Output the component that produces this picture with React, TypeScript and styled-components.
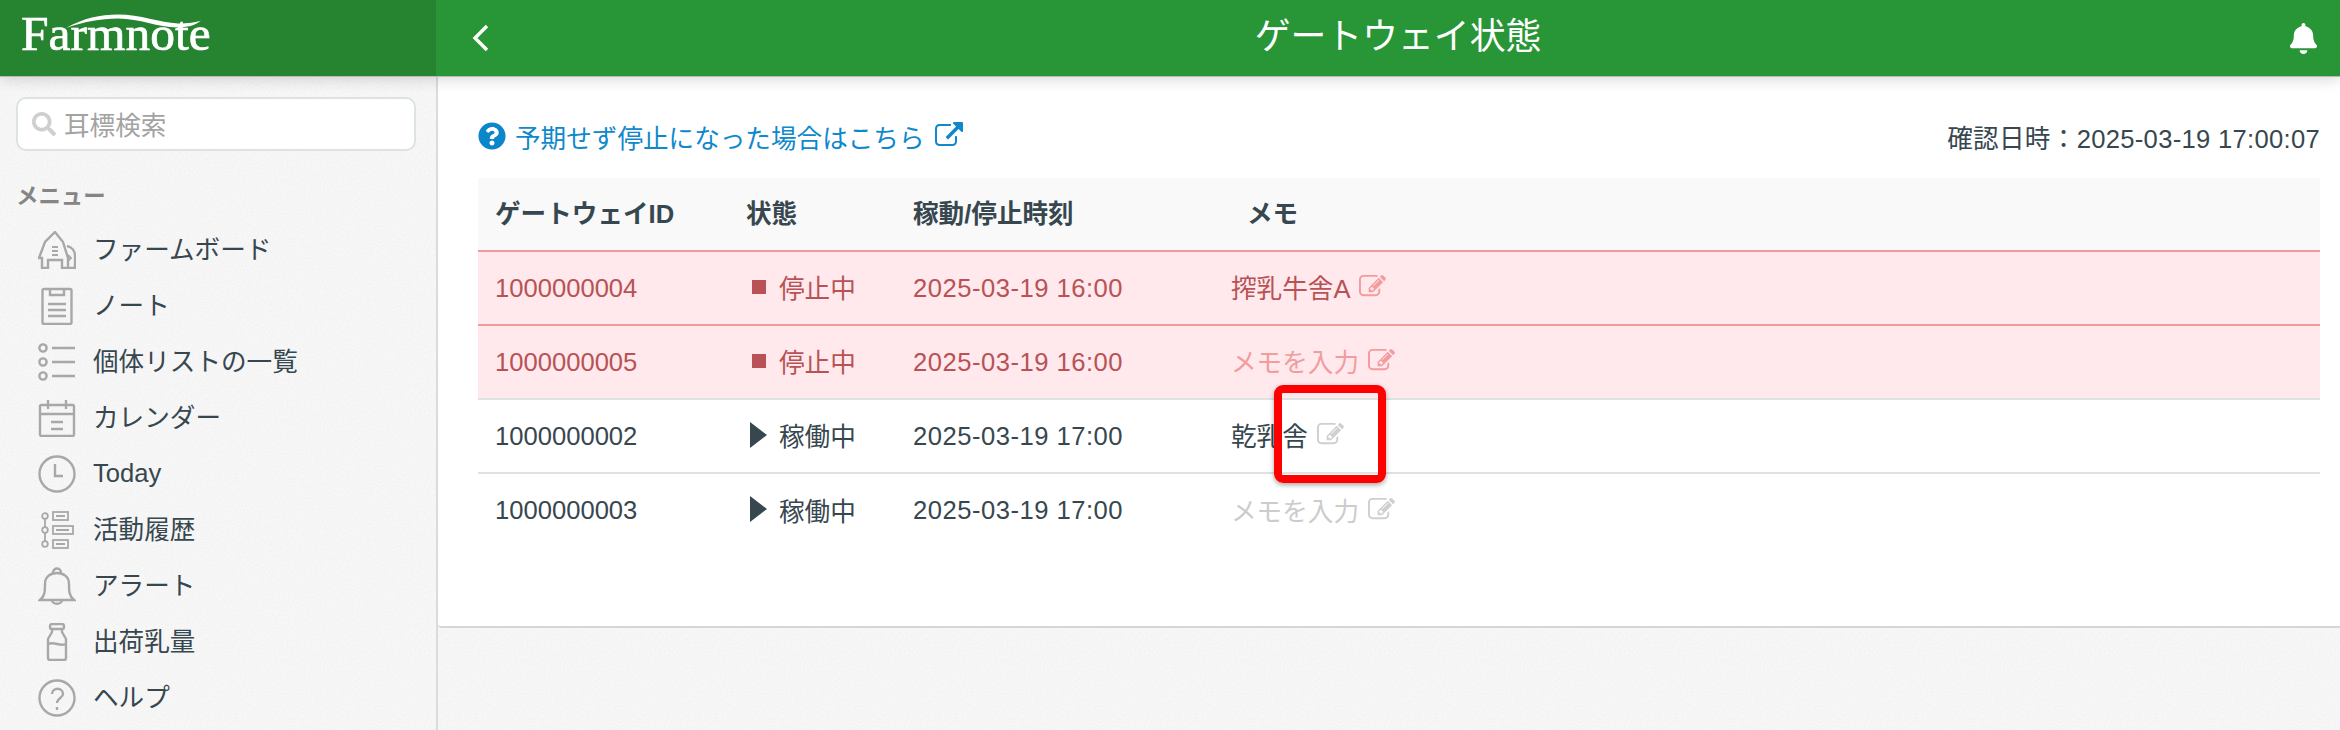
import React from 'react';
import styled, {createGlobalStyle} from 'styled-components';
import {FaBell, FaQuestionCircle, FaSearch} from 'react-icons/fa';

const NOISE =
  "data:image/svg+xml,%3Csvg xmlns='http://www.w3.org/2000/svg' width='240' height='240'%3E%3Cfilter id='n'%3E%3CfeTurbulence type='fractalNoise' baseFrequency='0.55' numOctaves='2' stitchTiles='stitch'/%3E%3CfeColorMatrix values='0 0 0 0 0.5 0 0 0 0 0.5 0 0 0 0 0.5 0.22 0 0 0 -0.09'/%3E%3C/filter%3E%3Crect width='240' height='240' filter='url(%23n)'/%3E%3C/svg%3E";

const GlobalStyle = createGlobalStyle`
  html, body {
    margin: 0;
    padding: 0;
    height: 730px;
    overflow: hidden;
    background: #f7f7f7;
    font-family: "Liberation Sans", "Noto Sans CJK JP", sans-serif;
    color: #37474f;
  }
`;

const Page = styled.div`
  position: relative;
  width: 2340px;
  height: 730px;
  display: flex;
  flex-direction: column;
  overflow: hidden;
  background-image: url("${NOISE}");
`;

const TopBar = styled.header`
  height: 76px;
  flex: none;
  display: flex;
  background: #289536;
  color: #fff;
  position: relative;
  z-index: 2;
  box-shadow: 0 1px 0 #b9b9b9, 0 3px 14px rgba(0, 0, 0, 0.16);
`;

const LogoArea = styled.div`
  width: 436px;
  flex: none;
  background: #26832f;
  position: relative;
`;

const LogoText = styled.span`
  position: absolute;
  left: 21px;
  top: 6px;
  font-family: "Liberation Serif", serif;
  font-size: 49.5px;
  line-height: 56px;
  color: #fff;
  -webkit-text-stroke: 0.7px #fff;
`;

const LogoSwoosh = styled.svg`
  position: absolute;
  left: 60px;
  top: 12px;
`;

const TitleArea = styled.div`
  flex: 1;
  display: flex;
  align-items: center;
  padding: 0 21px 0 35px;
`;

const BackIcon = styled.svg`
  flex: none;
`;

const Title = styled.h1`
  flex: 1;
  margin: 0;
  padding: 0 0 3px 17px;
  text-align: center;
  font-size: 35.84px;
  font-weight: 400;
  line-height: 44px;
`;

const BellIcon = styled(FaBell)`
  flex: none;
  font-size: 31px;
`;

const Body = styled.div`
  flex: 1;
  display: flex;
  min-height: 0;
`;

const Sidebar = styled.aside`
  width: 400px;
  flex: none;
  padding: 21px 20px 0 16px;
  border-right: 2px solid #d8dcde;
`;

const SearchBox = styled.div`
  height: 54px;
  box-sizing: border-box;
  display: flex;
  align-items: center;
  gap: 8px;
  padding-left: 14px;
  background: #fff;
  border: 2px solid #dde2e5;
  border-radius: 10px;
`;

const SearchIcon = styled(FaSearch)`
  font-size: 24px;
  color: #cfcfcf;
`;

const SearchPlaceholder = styled.span`
  padding-bottom: 2px;
  font-size: 25.6px;
  color: #a3a3a3;
`;

const MenuLabel = styled.div`
  margin: 32px 0 0;
  font-size: 22.4px;
  line-height: 28px;
  font-weight: 700;
  color: #858585;
`;

const MenuList = styled.ul`
  list-style: none;
  margin: 8px 0 0;
  padding: 0;
`;

const MenuItem = styled.li`
  height: 56px;
  display: flex;
  align-items: center;
  padding-left: 22px;
  font-size: 25.6px;
  color: #37474f;
`;

const MenuIconSlot = styled.span`
  width: 55px;
  flex: none;
  display: flex;
  margin-top: 5px;
`;

const MenuText = styled.span<{$latin?: boolean}>`
  padding-top: ${(p) => (p.$latin ? 5 : 0)}px;
`;

const MenuSvg = styled.svg`
  fill: none;
  stroke: #a8a8a8;
  stroke-width: 2.4;
`;

const Main = styled.main`
  flex: 1;
  min-width: 0;
`;

const Card = styled.section`
  height: 552px;
  box-sizing: border-box;
  padding: 38px 20px 0 40px;
  background: #fff;
  border-bottom: 2px solid #d6d6d6;
  border-radius: 4px 0 0 4px;
`;

const InfoRow = styled.div`
  height: 64px;
  display: flex;
  align-items: flex-start;
  justify-content: space-between;
`;

const HelpLink = styled.a`
  display: flex;
  align-items: center;
  height: 44px;
  color: #0f88cc;
  font-size: 25.6px;
`;

const HelpIcon = styled(FaQuestionCircle)`
  font-size: 28px;
  margin-right: 9px;
  color: #0a86ca;
`;

const ExternalIcon = styled.svg`
  margin-left: 10px;
  fill: #0f88cc;
`;

const CheckedAt = styled.span`
  padding-top: 3px;
  line-height: 44px;
  font-size: 25.6px;
  letter-spacing: 0.3px;
  color: #37474f;
`;

const Table = styled.table`
  width: 100%;
  border-collapse: collapse;
  table-layout: fixed;
  font-size: 25.6px;
`;

const HeadRow = styled.tr`
  height: 73px;
  background: #f9f9f9;
`;

const Th = styled.th<{$w: number; $pad: number}>`
  width: ${(p) => p.$w}px;
  padding: 0 0 5px ${(p) => p.$pad}px;
  text-align: left;
  font-weight: 700;
  box-sizing: border-box;
`;

const Row = styled.tr<{$stopped?: boolean}>`
  height: 74px;
  background: ${(p) => (p.$stopped ? '#ffe9ec' : '#fff')};
  color: ${(p) => (p.$stopped ? '#b85256' : '#37474f')};
  border-top: 2px solid ${(p) => (p.$stopped ? '#f09a9c' : '#dde2e5')};
`;

const Td = styled.td<{$pad: number; $spaced?: boolean}>`
  padding: 0 0 0 ${(p) => p.$pad}px;
  white-space: nowrap;
  letter-spacing: ${(p) => (p.$spaced ? '0.5px' : 'normal')};
`;

const Status = styled.span`
  display: flex;
  align-items: center;
  gap: 12px;
  margin-top: -3px;
`;

const StopMark = styled.i`
  width: 14px;
  height: 14px;
  margin: 0 1px 0 2px;
  background: currentColor;
`;

const PlayMark = styled.i`
  width: 0;
  height: 0;
  border-style: solid;
  border-width: 13px 0 13px 17px;
  border-color: transparent transparent transparent currentColor;
`;

const Memo = styled.span`
  display: flex;
  align-items: center;
  gap: 9px;
  margin-top: -3px;
`;

const MemoPlaceholder = styled.span<{$stopped?: boolean}>`
  color: ${(p) => (p.$stopped ? '#f29c9e' : '#cccccc')};
`;

const EditIcon = styled.svg<{$stopped?: boolean}>`
  fill: ${(p) => (p.$stopped ? '#f29c9e' : '#cfcfcf')};
`;

const Highlight = styled.div`
  position: absolute;
  left: 1274px;
  top: 385px;
  width: 112px;
  height: 98px;
  box-sizing: border-box;
  border: 8px solid #ff0000;
  border-radius: 9px;
  box-shadow: 0 2px 5px rgba(0, 0, 0, 0.35);
  z-index: 3;
`;

const EDIT_PATH =
  'M888 1184l116-116-152-152-116 116v56h96v96h56zm440-720q-16-16-33 1l-350 350q-17 17-1 33t33-1l350-350q17-17 1-33zm80 594v190q0 119-84.5 203.5t-203.5 84.5h-832q-119 0-203.5-84.5t-84.5-203.5v-832q0-119 84.5-203.5t203.5-84.5h832q63 0 117 25 15 7 18 23 3 17-9 29l-49 49q-14 14-32 8-23-6-45-6h-832q-66 0-113 47t-47 113v832q0 66 47 113t113 47h832q66 0 113-47t47-113v-126q0-13 9-22l64-64q15-15 35-7t20 29zm-96-738l288 288-672 672h-288v-288zm444 132l-92 92-288-288 92-92q28-28 68-28t68 28l152 152q28 28 28 68t-28 68z';

const EXTERNAL_PATH =
  'M1408 928v320q0 119-84.5 203.5t-203.5 84.5h-832q-119 0-203.5-84.5t-84.5-203.5v-832q0-119 84.5-203.5t203.5-84.5h704q14 0 23 9t9 23v64q0 14-9 23t-23 9h-704q-66 0-113 47t-47 113v832q0 66 47 113t113 47h832q66 0 113-47t47-113v-320q0-14 9-23t23-9h64q14 0 23 9t9 23zm384-864v512q0 26-19 45t-45 19-45-19l-176-176-652 652q-10 10-23 10t-23-10l-114-114q-10-10-10-23t10-23l652-652-176-176q-19-19-19-45t19-45 45-19h512q26 0 45 19t19 45z';

const icons: Record<string, React.ReactNode> = {
  board: (
    <>
      <path d="M4 37V27H1l6-16L17 1l8 10 5 16v10h-6v-8H10v8z" />
      <path d="M29 15c5 1 8 5 8 10v12h-7" />
      <path d="M14 16h6M14 20h6M14 24h6M30 24l3 3-3 3" strokeWidth="1.8" />
    </>
  ),
  note: (
    <>
      <rect x="4.5" y="2" width="29" height="35" rx="1.5" />
      <path d="M12 2v6h14V2M10 17h18M10 23h18M10 29h18" />
    </>
  ),
  list: (
    <>
      <circle cx="5" cy="5" r="3.6" />
      <circle cx="5" cy="19" r="3.6" />
      <circle cx="5" cy="33" r="3.6" />
      <path d="M14 5h23M14 19h23M14 33h23" />
    </>
  ),
  calendar: (
    <>
      <rect x="2" y="6" width="34" height="31" rx="1.5" />
      <path d="M2 15h34M10 1v9M28 1v9M13 23h12M13 30h12" />
    </>
  ),
  clock: (
    <>
      <circle cx="19" cy="19" r="17.5" />
      <path d="M17 9v12h8" />
    </>
  ),
  history: (
    <g strokeWidth="1.8">
      <circle cx="7" cy="5" r="2.8" />
      <circle cx="7" cy="19" r="2.8" />
      <circle cx="7" cy="33" r="2.8" />
      <path d="M7 8v8M7 22v8" />
      <rect x="15" y="1" width="15" height="8" />
      <rect x="15" y="15" width="20" height="8" />
      <rect x="15" y="29" width="15" height="8" />
      <path d="M18 5h9M18 19h13M18 33h9" />
    </g>
  ),
  bell: (
    <>
      <path d="M2 33c5-4 5-9 5-16 0-7 5-11 12-11s12 4 12 11c0 7 0 12 5 16z" />
      <path d="M15 6c0-6 8-6 8 0M14 33c0 5 10 5 10 0" />
    </>
  ),
  bottle: (
    <>
      <rect x="12" y="1" width="14" height="5" rx="2" />
      <path d="M14 6v3l-4 7v19a2 2 0 0 0 2 2h14a2 2 0 0 0 2-2V16l-4-7V6" />
      <path d="M10 21c6-3 12 3 18 0" />
    </>
  ),
  help: (
    <>
      <circle cx="19" cy="19" r="17.5" />
      <path d="M14 15c0-7 11-7 11 0 0 4-6 4-6 9" />
      <path d="M19 28v3" />
    </>
  ),
};

const menu = [
  {icon: 'board', label: 'ファームボード'},
  {icon: 'note', label: 'ノート'},
  {icon: 'list', label: '個体リストの一覧'},
  {icon: 'calendar', label: 'カレンダー'},
  {icon: 'clock', label: 'Today', latin: true},
  {icon: 'history', label: '活動履歴'},
  {icon: 'bell', label: 'アラート'},
  {icon: 'bottle', label: '出荷乳量'},
  {icon: 'help', label: 'ヘルプ'},
];

const gateways = [
  {id: '1000000004', stopped: true, time: '2025-03-19 16:00', memo: '搾乳牛舎A'},
  {id: '1000000005', stopped: true, time: '2025-03-19 16:00', memo: ''},
  {id: '1000000002', stopped: false, time: '2025-03-19 17:00', memo: '乾乳舎'},
  {id: '1000000003', stopped: false, time: '2025-03-19 17:00', memo: ''},
];

export default function App() {
  return (
    <Page>
      <GlobalStyle />
      <TopBar>
        <LogoArea>
          <LogoText>Farmnote</LogoText>
          <LogoSwoosh width="150" height="20" viewBox="0 0 150 20">
            <path d="M6 16C24 6 40 2.500 58 2.500c22 0 42 8 60 9 10 0 18-1 23-3-6 5-14 7-24 7C98 15.500 80 6.500 58 6.500 40 6.500 24 10 6 16z" fill="#fff" />
          </LogoSwoosh>
        </LogoArea>
        <TitleArea>
          <BackIcon width="20" height="30" viewBox="0 0 20 30">
            <path d="M16 3L4 15l12 12" fill="none" stroke="#fff" strokeWidth="3.4" />
          </BackIcon>
          <Title>ゲートウェイ状態</Title>
          <BellIcon />
        </TitleArea>
      </TopBar>
      <Body>
        <Sidebar>
          <SearchBox>
            <SearchIcon />
            <SearchPlaceholder>耳標検索</SearchPlaceholder>
          </SearchBox>
          <MenuLabel>メニュー</MenuLabel>
          <MenuList>
            {menu.map((item) => (
              <MenuItem key={item.label}>
                <MenuIconSlot>
                  <MenuSvg width="38" height="38" viewBox="0 0 38 38">{icons[item.icon]}</MenuSvg>
                </MenuIconSlot>
                <MenuText $latin={item.latin}>{item.label}</MenuText>
              </MenuItem>
            ))}
          </MenuList>
        </Sidebar>
        <Main>
          <Card>
            <InfoRow>
              <HelpLink>
                <HelpIcon />
                予期せず停止になった場合はこちら
                <ExternalIcon width="28" height="28" viewBox="0 0 1792 1792">
                  <path d={EXTERNAL_PATH} />
                </ExternalIcon>
              </HelpLink>
              <CheckedAt>確認日時：2025-03-19 17:00:07</CheckedAt>
            </InfoRow>
            <Table>
              <thead>
                <HeadRow>
                  <Th $w={252} $pad={17}>ゲートウェイID</Th>
                  <Th $w={183} $pad={16}>状態</Th>
                  <Th $w={271} $pad={0}>稼動/停止時刻</Th>
                  <Th $w={1136} $pad={63}>メモ</Th>
                </HeadRow>
              </thead>
              <tbody>
                {gateways.map((g) => (
                  <Row key={g.id} $stopped={g.stopped}>
                    <Td $pad={17}>{g.id}</Td>
                    <Td $pad={20}>
                      <Status>
                        {g.stopped ? <StopMark /> : <PlayMark />}
                        {g.stopped ? '停止中' : '稼働中'}
                      </Status>
                    </Td>
                    <Td $pad={0} $spaced>{g.time}</Td>
                    <Td $pad={47}>
                      <Memo>
                        {g.memo || <MemoPlaceholder $stopped={g.stopped}>メモを入力</MemoPlaceholder>}
                        <EditIcon $stopped={g.stopped} width="27" height="27" viewBox="0 0 1792 1792">
                          <path d={EDIT_PATH} />
                        </EditIcon>
                      </Memo>
                    </Td>
                  </Row>
                ))}
              </tbody>
            </Table>
          </Card>
        </Main>
      </Body>
      <Highlight />
    </Page>
  );
}
